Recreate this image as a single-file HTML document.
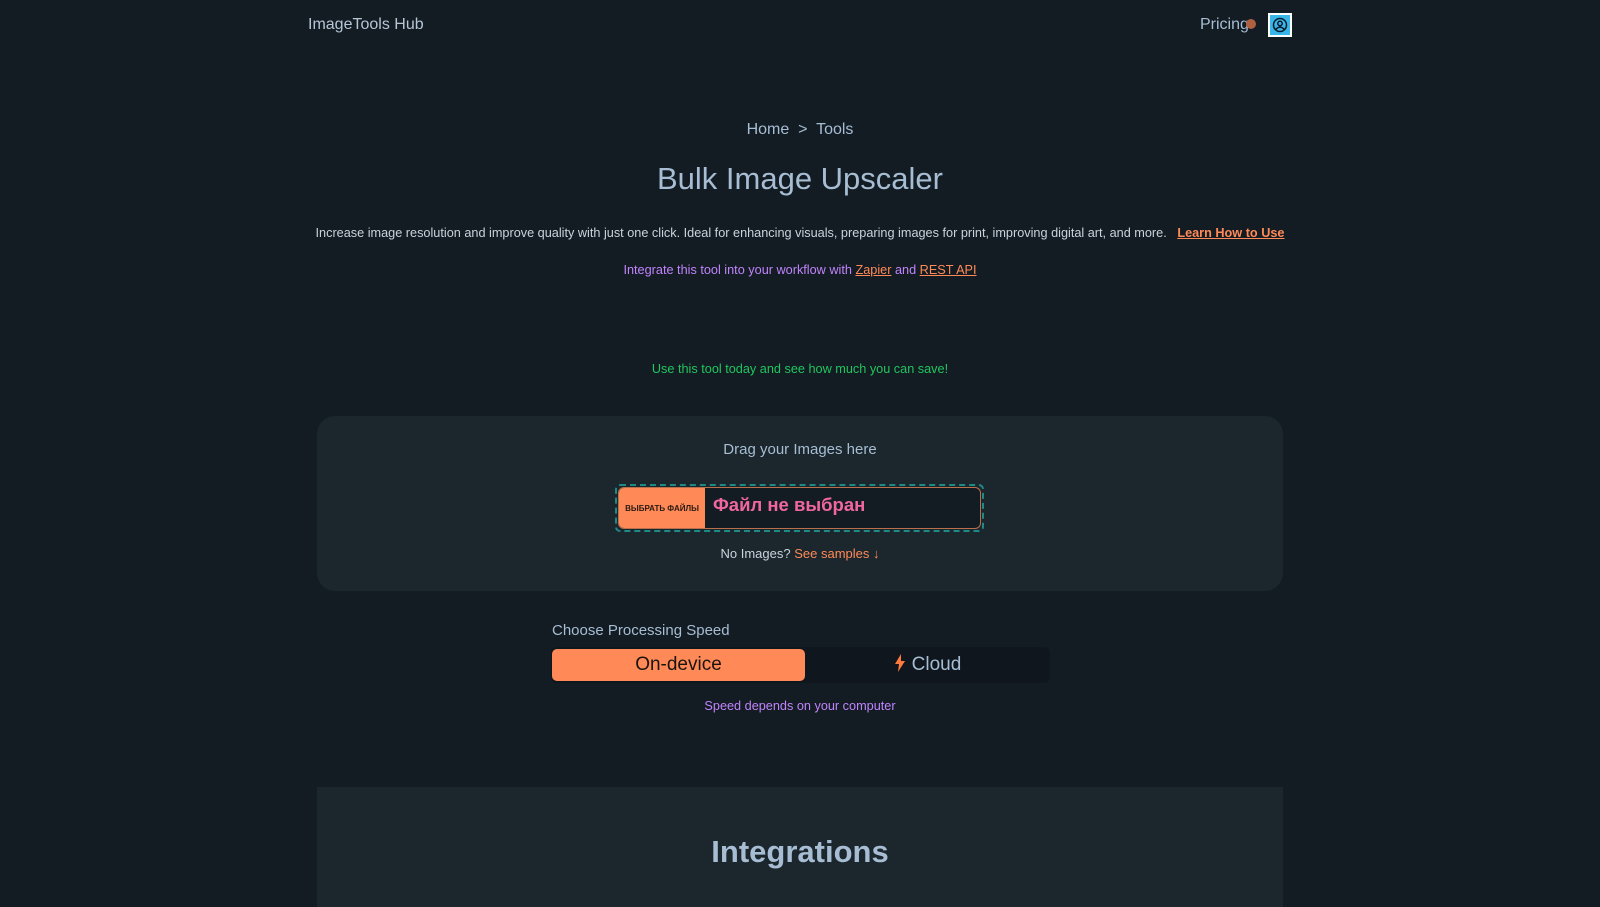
<!DOCTYPE html>
<html><head><meta charset="utf-8"><style>
*{box-sizing:border-box;margin:0;padding:0}
body{width:1600px;height:900px;overflow:hidden;background:#131b23;font-family:"Liberation Sans","Noto Sans CJK SC",sans-serif;color:#a7bdd3;position:relative}
.a{position:absolute;white-space:nowrap}
.c{left:0;width:1600px;text-align:center}
a{color:#ff8a57;text-decoration:underline}
</style></head><body>
<div class="a" style="left:308px;top:16px;font-size:16px;color:#b6c6d6">ImageTools Hub</div>
<div class="a" style="left:1200px;top:16px;font-size:16px;color:#a7bdd3">Pricing</div>
<div class="a" style="left:1246px;top:19px;width:10px;height:10px;border-radius:50%;background:#b0603f"></div>
<div class="a" style="left:1268px;top:13px;width:24px;height:24px;background:#fff;padding:2px"><div style="width:20px;height:20px;background:#38b6e8;display:flex;align-items:center;justify-content:center"><svg width="16" height="16" viewBox="0 0 16 16" fill="none" stroke="#0a1a2a" stroke-width="1.5"><circle cx="8" cy="8" r="6.5"/><circle cx="8" cy="6.5" r="2.2"/><path d="M3.8 12.6c1-1.6 2.4-2.4 4.2-2.4s3.2.8 4.2 2.4"/></svg></div></div>
<div class="a c" style="top:121px;font-size:16px">Home &nbsp;&gt;&nbsp; Tools</div>
<div class="a c" style="top:161px;font-size:31px">Bulk Image Upscaler</div>
<div class="a c" style="top:226px;font-size:12.7px;color:#c9d3dc">Increase image resolution and improve quality with just one click. Ideal for enhancing visuals, preparing images for print, improving digital art, and more. &nbsp; <a style="font-weight:bold">Learn How to Use</a></div>
<div class="a c" style="top:263px;font-size:12.7px;color:#c084fc">Integrate this tool into your workflow with <a>Zapier</a> and <a>REST API</a></div>
<div class="a c" style="top:362px;font-size:12.7px;color:#22c55e">Use this tool today and see how much you can save!</div>
<div class="a" style="left:317px;top:416px;width:966px;height:175px;border-radius:18px;background:#1b262d"></div>
<div class="a c" style="top:441px;font-size:15px">Drag your Images here</div>
<div class="a" style="left:615px;top:484px;width:369px;height:48px;border:2px dashed #1f8a85;border-radius:5px;padding:1px">
<div style="display:flex;height:100%;border:1px solid #b8704c;border-radius:6px;overflow:hidden;background:#131b23">
<div style="width:86px;background:#ff8a57;color:#2a1a12;font-size:8px;font-weight:bold;display:flex;align-items:center;justify-content:center">ВЫБРАТЬ ФАЙЛЫ</div>
<div style="padding-left:8px;color:#f0679f;font-size:18.5px;font-weight:bold;line-height:34px">Файл не выбран</div></div></div>
<div class="a c" style="top:546px;font-size:13px;color:#c9d3dc">No Images? <span style="color:#ff8a57">See samples ↓</span></div>
<div class="a" style="left:552px;top:622px;font-size:15px">Choose Processing Speed</div>
<div class="a" style="left:551px;top:647px;width:499px;height:36px;background:#0f161d;border-radius:6px"></div>
<div class="a" style="left:552px;top:649px;width:253px;height:32px;background:#ff8a57;border-radius:5px;text-align:center;font-size:19px;line-height:32px;color:#1a1410">On-device</div>
<div class="a" style="left:805px;top:649px;width:245px;height:32px;text-align:center;font-size:19px;line-height:32px;color:#a7bdd3"><svg width="12" height="18" viewBox="0 0 12 18" style="vertical-align:-2px;margin-right:6px"><path d="M7 0L1 10h4l-1 8 7-11H7z" fill="#ff7a3d"/></svg>Cloud</div>
<div class="a c" style="top:699px;font-size:12.7px;color:#c084fc">Speed depends on your computer</div>
<div class="a" style="left:317px;top:787px;width:966px;height:120px;background:#1b262d"></div>
<div class="a c" style="top:834px;font-size:31px;font-weight:bold;color:#a7bdd3">Integrations</div>
</body></html>
